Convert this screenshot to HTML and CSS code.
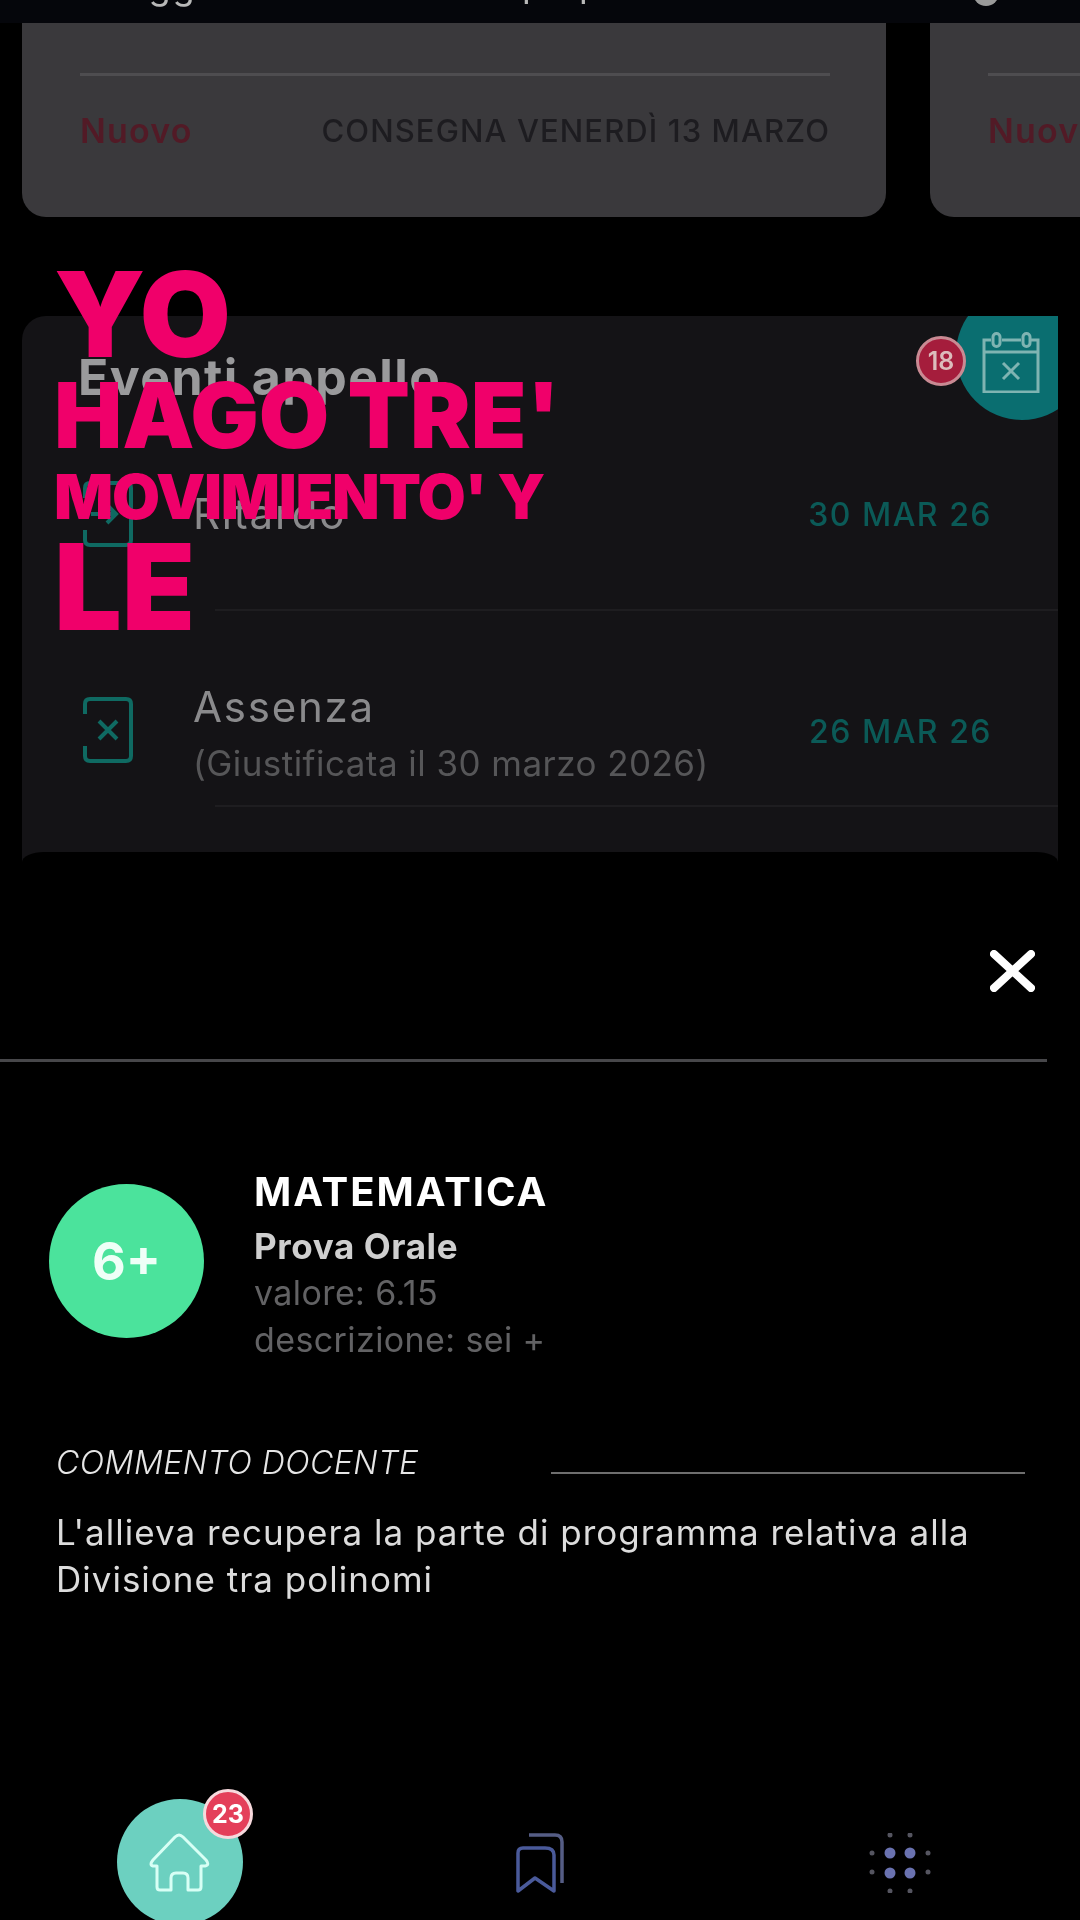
FILE: index.html
```html
<!DOCTYPE html>
<html lang="it">
<head>
<meta charset="utf-8">
<title>Voto</title>
<link rel="stylesheet" href="styles.css">
</head>
<body>
<div class="screen">
  <header class="topbar">
    <span class="top-a">Oggi</span>
    <span class="top-b">p</span>
    <span class="top-c">p</span>
    <span class="top-d"></span>
  </header>

  <section class="cards">
    <article class="card">
      <div class="card-line"></div>
      <div class="card-foot"><span class="nuovo">Nuovo</span><span class="consegna">CONSEGNA VENERDÌ 13 MARZO</span></div>
    </article>
    <article class="card">
      <div class="card-line"></div>
      <div class="card-foot"><span class="nuovo">Nuovo</span></div>
    </article>
  </section>

  <section class="events">
    <div class="blob"></div>
    <svg class="cal" viewBox="0 0 58 61" fill="none" stroke="#7fb4b2" stroke-width="3">
      <path d="M9 8H2V60H56V8H49M20 8H39M2 20H56"/>
      <rect x="11" y="1.5" width="7" height="13" rx="3.5"/>
      <rect x="41" y="1.5" width="7" height="13" rx="3.5"/>
      <path d="M21 31L37 47M37 31L21 47"/>
    </svg>
    <div class="badge-18">18</div>
    <h2 class="ev-title">Eventi appello</h2>
    <div class="ev-row ev-first">
      <svg class="ev-icon" viewBox="0 0 50 66" fill="none" stroke="#0f6a62" stroke-width="4">
        <path d="M2 17V7Q2 2 7 2H43Q48 2 48 7V59Q48 64 43 64H7Q2 64 2 59V49M8 33H32M24 24L33 33L24 42"/>
      </svg>
      <div class="ev-text"><div class="ev-name">Ritardo</div></div>
      <div class="ev-date">30 MAR 26</div>
    </div>
    <div class="ev-divider"></div>
    <div class="ev-row ev-second">
      <svg class="ev-icon" viewBox="0 0 50 66" fill="none" stroke="#0f6a62" stroke-width="4">
        <path d="M2 17V7Q2 2 7 2H43Q48 2 48 7V59Q48 64 43 64H7Q2 64 2 59V49M16 24L34 42M34 24L16 42"/>
      </svg>
      <div class="ev-text">
        <div class="ev-name">Assenza</div>
        <div class="ev-note">(Giustificata il 30 marzo 2026)</div>
      </div>
      <div class="ev-date">26 MAR 26</div>
    </div>
    <div class="ev-divider"></div>
    <div class="ev-cap"></div>
  </section>

  <section class="sheet">
    <div class="sheet-head">
      <svg class="close" viewBox="0 0 45 42" fill="none" stroke="#fff" stroke-width="8" stroke-linecap="round">
        <path d="M4 4L41 38M41 4L4 38"/>
      </svg>
    </div>
    <div class="sheet-divider"></div>
    <div class="grade">
      <div class="grade-circle">6+</div>
      <div class="grade-info">
        <div class="subject">MATEMATICA</div>
        <div class="kind">Prova Orale</div>
        <div class="meta">valore: 6.15</div>
        <div class="meta">descrizione: sei +</div>
      </div>
    </div>
    <div class="comment-head">
      <span class="comment-label">COMMENTO DOCENTE</span>
      <span class="comment-line"></span>
    </div>
    <p class="comment">L'allieva recupera la parte di programma relativa alla<br>Divisione tra polinomi</p>

    <nav class="nav">
      <div class="home">
        <svg class="home-icon" viewBox="-2 0 62 60" fill="none" stroke="#d8fff5" stroke-width="3" stroke-linejoin="round">
          <path d="M25 5Q29 1 33 5L56 28Q60 33 55 34H51V55Q51 58 48 58H38V46Q38 41 33 41H26Q21 41 21 46V58H10Q7 58 7 55V34H3Q-1 33 3 28Z"/>
        </svg>
        <div class="badge-23">23</div>
      </div>
      <svg class="bookmarks" viewBox="0 0 50 60" fill="none" stroke-width="3.5" stroke-linejoin="round">
        <path d="M14 2H40Q47 2 47 9V50" stroke="#555d85"/>
        <path d="M8 15H30Q39 15 39 22V58L20 45L3 58V20Q3 15 8 15Z" stroke="#4a5a9a"/>
      </svg>
      <svg class="dots" viewBox="0 0 64 60">
        <g fill="#6a72b0">
          <circle cx="22" cy="20" r="5.5"/><circle cx="42" cy="20" r="5.5"/>
          <circle cx="22" cy="40" r="5.5"/><circle cx="42" cy="40" r="5.5"/>
        </g>
        <g fill="#555560">
          <circle cx="22" cy="2" r="2.5"/><circle cx="42" cy="2" r="2.5"/>
          <circle cx="22" cy="58" r="2.5"/><circle cx="42" cy="58" r="2.5"/>
          <circle cx="4" cy="20" r="2.5"/><circle cx="60" cy="20" r="2.5"/>
          <circle cx="4" cy="39" r="2.5"/><circle cx="60" cy="39" r="2.5"/>
        </g>
      </svg>
    </nav>
  </section>

  <div class="caption">
    <div class="cap-yo">YO</div>
    <div class="cap-hago">HAGO TRE'</div>
    <div class="cap-mov">MOVIMIENTO' Y</div>
    <div class="cap-le">LE</div>
  </div>
</div>
</body>
</html>
```

FILE: styles.css
```css
* { box-sizing: border-box; }
html, body { margin: 0; padding: 0; background: #000; }
.screen {
  position: relative;
  width: 1080px;
  height: 1920px;
  overflow: hidden;
  background: #000;
  font-family: Inter, "Noto Sans", sans-serif;
  filter: blur(.5px);
}

/* top bar */
.topbar {
  position: relative;
  height: 23px;
  background: #05060b;
  overflow: hidden;
  color: #b8b8b8;
  font-size: 36px;
}
.top-a, .top-b, .top-c, .top-d { position: absolute; line-height: 40px; }
.top-a { left: 119px; top: -34px; letter-spacing: 2px; }
.top-b { left: 522px; top: -36px; }
.top-c { left: 579px; top: -36px; }
.top-d { left: 973px; top: -20px; width: 26px; height: 26px; border-radius: 50%; background: #9a9a9a; }

/* assignment cards */
.cards {
  display: flex;
  gap: 44px;
  padding-left: 22px;
  height: 194px;
  overflow: hidden;
}
.card {
  flex: none;
  width: 864px;
  height: 194px;
  padding: 50px 56px 0 58px;
  background: #3a393c;
  border-radius: 0 0 24px 24px;
}
.card-line { height: 3px; background: #4e4d50; }
.card-foot {
  display: flex;
  justify-content: space-between;
  align-items: center;
  margin-top: 34px;
  height: 40px;
}
.nuovo { color: #521a26; font-size: 34px; font-weight: 600; letter-spacing: 1.2px; }
.consegna { color: #1d1c20; font-size: 31px; font-weight: 500; letter-spacing: 1.1px; }

/* events card */
.events {
  position: relative;
  margin: 99px 22px 0 22px;
  height: 546px;
  background: #141316;
  border-radius: 24px 0 0 0;
  overflow: hidden;
}
.blob {
  position: absolute;
  top: -28px;
  right: -30px;
  width: 132px;
  height: 132px;
  border-radius: 50%;
  background: #0a6e70;
}
.cal {
  position: absolute;
  top: 16px;
  right: 18px;
  width: 58px;
  height: 61px;
}
.badge-18 {
  position: absolute;
  top: 20px;
  left: 894px;
  width: 50px;
  height: 50px;
  display: flex;
  align-items: center;
  justify-content: center;
  border-radius: 50%;
  border: 3px solid #c98a93;
  background: #a51d3c;
  color: #dcbcbc;
  font-size: 25px;
  font-weight: 600;
}
.ev-title {
  margin: 38px 0 0 56px;
  color: #9a9a9c;
  font-size: 50px;
  line-height: 46px;
  font-weight: 700;
  letter-spacing: 1.4px;
}
.ev-row {
  display: flex;
  align-items: center;
  padding: 0 66px 0 61px;
}
.ev-first { margin-top: 83px; height: 62px; }
.ev-second { margin-top: 59px; height: 120px; }
.ev-icon { flex: none; width: 50px; height: 66px; }
.ev-text { flex: 1; margin-left: 60px; }
.ev-second .ev-text { margin-top: 10px; }
.ev-second .ev-date { margin-top: 3px; }
.ev-name { color: #8a8a8c; font-size: 42px; line-height: 56px; font-weight: 400; letter-spacing: 1.8px; }
.ev-note { color: #565658; font-size: 35px; line-height: 56px; letter-spacing: .45px; }
.ev-date { color: #0b5a57; font-size: 32px; font-weight: 500; letter-spacing: 1.5px; }
.ev-divider { height: 2px; margin-left: 193px; background: #1e1d20; }
.ev-first + .ev-divider { margin-top: 64px; }
.ev-second + .ev-divider { margin-top: 15px; }
.ev-cap {
  position: absolute;
  left: 0;
  right: 0;
  bottom: 0;
  height: 10px;
  background: #000;
  border-radius: 22px 22px 0 0 / 10px 10px 0 0;
}

/* sheet */
.sheet {
  display: flex;
  flex-direction: column;
  height: 1058px;
  background: #000;
}
.sheet-head {
  display: flex;
  justify-content: flex-end;
  padding: 88px 45px 0 0;
}
.close { width: 45px; height: 42px; }
.sheet-divider { width: 1047px; height: 3px; margin-top: 67px; background: #47474a; }
.grade {
  display: flex;
  gap: 50px;
  margin: 122px 0 0 49px;
}
.grade-circle {
  flex: none;
  width: 155px;
  height: 154px;
  display: flex;
  align-items: center;
  justify-content: center;
  border-radius: 50%;
  background: #4be39c;
  color: #effff7;
  font-size: 52px;
  font-weight: 700;
}
.grade-info { margin-top: -14px; }
.subject { color: #fff; font-size: 40px; line-height: 44px; font-weight: 700; letter-spacing: 2px; }
.kind { margin-top: 10px; color: #cfcfcf; font-size: 35px; line-height: 45px; font-weight: 700; letter-spacing: .6px; }
.meta { color: #626264; font-size: 34px; line-height: 47px; letter-spacing: .4px; }
.comment-head {
  display: flex;
  align-items: flex-start;
  margin: 78px 55px 0 56px;
}
.comment-label { color: #e6e6e6; font-size: 32px; line-height: 44px; font-style: italic; font-weight: 300; letter-spacing: .5px; }
.comment-line { flex: 1; height: 2px; margin: 31px 0 0 132px; background: #6e6e6e; }
.comment {
  margin: 24px 0 0 56px;
  color: #dcdcdc;
  font-size: 35px;
  line-height: 47px;
  letter-spacing: 1px;
}

/* nav */
.nav {
  display: flex;
  align-items: flex-start;
  margin-top: auto;
  height: 121px;
  padding-left: 117px;
}
.home {
  position: relative;
  flex: none;
  width: 126px;
  height: 126px;
  border-radius: 50%;
  background: #6cd0c0;
}
.home-icon { position: absolute; left: 31px; top: 33px; width: 62px; height: 60px; }
.badge-23 {
  position: absolute;
  left: 86px;
  top: -10px;
  width: 50px;
  height: 50px;
  display: flex;
  align-items: center;
  justify-content: center;
  border-radius: 50%;
  border: 3px solid #f7d9dd;
  background: #e43f5a;
  color: #fff;
  font-size: 25px;
  font-weight: 700;
}
.bookmarks { flex: none; width: 50px; height: 60px; margin: 34px 0 0 272px; }
.dots { flex: none; width: 64px; height: 60px; margin: 34px 0 0 303px; }

/* video caption over everything */
.caption {
  position: absolute;
  left: 54px;
  top: 0;
  color: #f0006a;
  font-weight: 900;
  white-space: nowrap;
}
.caption div { position: absolute; left: 0; }
.cap-yo { top: 254px; font-size: 118px; line-height: 120px; }
.cap-hago { top: 370px; font-size: 91px; line-height: 90px; }
.cap-mov { top: 465px; font-size: 62px; line-height: 64px; letter-spacing: -1.3px; }
.cap-le { top: 527px; font-size: 120px; line-height: 120px; }
```
